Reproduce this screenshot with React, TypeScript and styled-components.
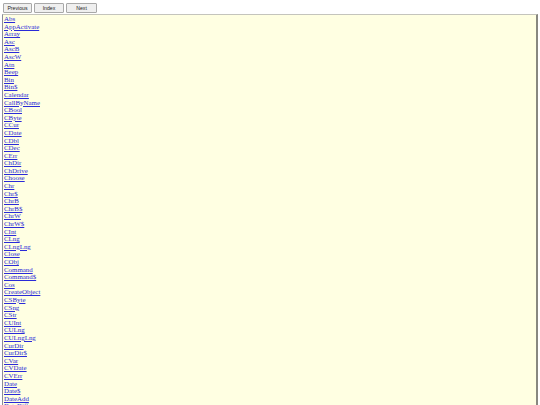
import React from "react";
import styled, { createGlobalStyle } from "styled-components";

const Global = createGlobalStyle`
  html, body { margin: 0; padding: 0; background: #ffffff; }
  body { font-family: "Liberation Serif", "Times New Roman", serif; overflow: hidden; }
`;

const Page = styled.div`
  display: flex;
  flex-direction: column;
  padding: 3px 2px 0 2px;
  gap: 1px;
  height: 405px;
  box-sizing: border-box;
`;

const Toolbar = styled.div`
  display: flex;
  gap: 2px;
  padding-left: 1px;
`;

const NavButton = styled.button<{ $w: number }>`
  width: ${(p) => p.$w}px;
  height: 10px;
  padding: 0;
  margin: 0;
  font-family: "Liberation Sans", Arial, sans-serif;
  font-size: 5.2px;
  line-height: 8px;
  color: #222;
  background: #efefef;
  border: 1px solid #a8a8a8;
  border-radius: 1px;
`;

const Frame = styled.div`
  flex: 1;
  background: #ffffe2;
  border-top: 1px solid #c4c4bc;
  border-left: 1px solid #8a8a9a;
  border-right: 2px solid #888880;
  padding: 0 0 0 1px;
  overflow: hidden;
`;

const List = styled.ul`
  list-style: none;
  margin: 0;
  padding: 0;
  display: flex;
  flex-direction: column;
`;

const Item = styled.li`
  font-size: 6.9px;
  line-height: 7.6px;
  height: 7.6px;
  white-space: nowrap;
`;

const Link = styled.a`
  color: #2a2ad8;
  text-decoration: underline;
`;

const names = [
  "Abs", "AppActivate", "Array", "Asc", "AscB", "AscW", "Atn", "Beep", "Bin", "Bin$",
  "Calendar", "CallByName", "CBool", "CByte", "CCur", "CDate", "CDbl", "CDec", "CErr",
  "ChDir", "ChDrive", "Choose", "Chr", "Chr$", "ChrB", "ChrB$", "ChrW", "ChrW$", "CInt",
  "CLng", "CLngLng", "Close", "CObj", "Command", "Command$", "Cos", "CreateObject",
  "CSByte", "CSng", "CStr", "CUInt", "CULng", "CULngLng", "CurDir", "CurDir$", "CVar",
  "CVDate", "CVErr", "Date", "Date$", "DateAdd", "DateDiff", "DatePart", "DateSerial",
];

export default function App() {
  return (
    <>
      <Global />
      <Page>
        <Toolbar>
          <NavButton $w={29}>Previous</NavButton>
          <NavButton $w={30}>Index</NavButton>
          <NavButton $w={31}>Next</NavButton>
        </Toolbar>
        <Frame>
          <List>
            {names.map((n) => (
              <Item key={n}>
                <Link href="#">{n}</Link>
              </Item>
            ))}
          </List>
        </Frame>
      </Page>
    </>
  );
}
